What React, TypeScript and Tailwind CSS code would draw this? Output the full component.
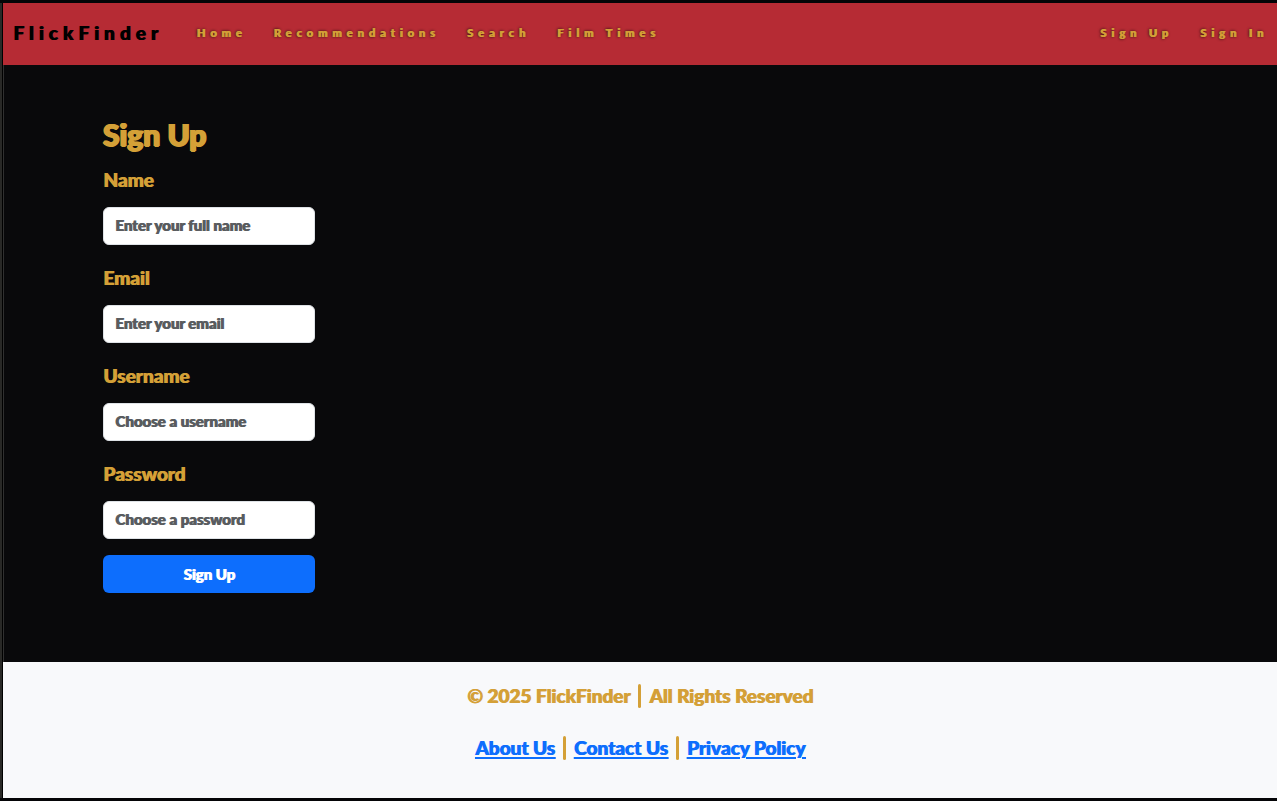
import type { ReactNode } from "react";

function NavLink({ children }: { children: ReactNode }) {
  return (
    <a
      href="#"
      className="text-[11px] leading-4 tracking-[5px] whitespace-nowrap text-[#d4a037] [text-shadow:1px_0_#d4a037,0_0_3px_#000000]"
    >
      {children}
    </a>
  );
}

function Divider() {
  return <span className="h-6 w-[3px] rounded-full bg-[#d4a037]" />;
}

function FooterLink({ children }: { children: ReactNode }) {
  return (
    <a href="#" className="text-[#0d6efd] underline decoration-2 underline-offset-2 [text-shadow:1px_0_currentcolor]">
      {children}
    </a>
  );
}

const fields = [
  { id: "name", label: "Name", type: "text", placeholder: "Enter your full name" },
  { id: "email", label: "Email", type: "email", placeholder: "Enter your email" },
  { id: "username", label: "Username", type: "text", placeholder: "Choose a username" },
  { id: "password", label: "Password", type: "password", placeholder: "Choose a password" },
];

export default function App() {
  return (
    <div className="flex min-h-screen border-y-[3px] border-[#050507] bg-[#09090b] font-['Lato',sans-serif] font-black [text-shadow:1px_0_currentcolor]">
      <div className="w-[3px] shrink-0 border-r border-black bg-[#292927]" />
      <div className="flex min-w-0 grow flex-col">
        <nav className="flex h-[62px] items-center bg-[#b62b34] pr-[9px] pb-0.5 pl-[10px]">
          <a href="#" className="mr-[34px] text-[19px] leading-7 tracking-[5px] text-black">
            FlickFinder
          </a>
          <div className="flex grow gap-[27px]">
            <NavLink>Home</NavLink>
            <NavLink>Recommendations</NavLink>
            <NavLink>Search</NavLink>
            <NavLink>Film Times</NavLink>
          </div>
          <div className="flex gap-[27px]">
            <NavLink>Sign Up</NavLink>
            <NavLink>Sign In</NavLink>
          </div>
        </nav>
        <main className="grow border-l border-[#303030] px-[99px] pt-12">
          <form className="w-[212px]" onSubmit={(e) => e.preventDefault()}>
            <h1 className="mb-2 text-[30px] leading-[42px] text-[#d4a037] [text-shadow:1px_0_currentcolor,-1px_0_currentcolor,0_1px_currentcolor]">
              Sign Up
            </h1>
            {fields.map((f) => (
              <div key={f.id} className="mb-4">
                <label htmlFor={f.id} className="mb-2.5 block text-[19px] leading-[34px] text-[#d4a037]">
                  {f.label}
                </label>
                <input
                  id={f.id}
                  type={f.type}
                  placeholder={f.placeholder}
                  className="block h-[38px] w-full rounded-md border border-[#dee2e6] bg-white px-[11px] pb-0.5 text-[15px] text-[#212529] [text-shadow:1px_0_currentcolor] placeholder:text-[#595c5f]"
                />
              </div>
            ))}
            <button type="submit" className="h-[38px] w-full rounded-md bg-[#0d6efd] text-[15px] text-white [text-shadow:1px_0_currentcolor]">
              Sign Up
            </button>
          </form>
        </main>
        <footer className="flex h-[136px] flex-col items-center gap-[22px] bg-[#f8f9fb] pt-[19px] text-[19px] leading-[30px] text-[#d4a037]">
          <p className="flex items-center gap-2">
            <span>© 2025 FlickFinder</span>
            <Divider />
            <span>All Rights Reserved</span>
          </p>
          <div className="flex items-center gap-2">
            <FooterLink>About Us</FooterLink>
            <Divider />
            <FooterLink>Contact Us</FooterLink>
            <Divider />
            <FooterLink>Privacy Policy</FooterLink>
          </div>
        </footer>
      </div>
    </div>
  );
}
